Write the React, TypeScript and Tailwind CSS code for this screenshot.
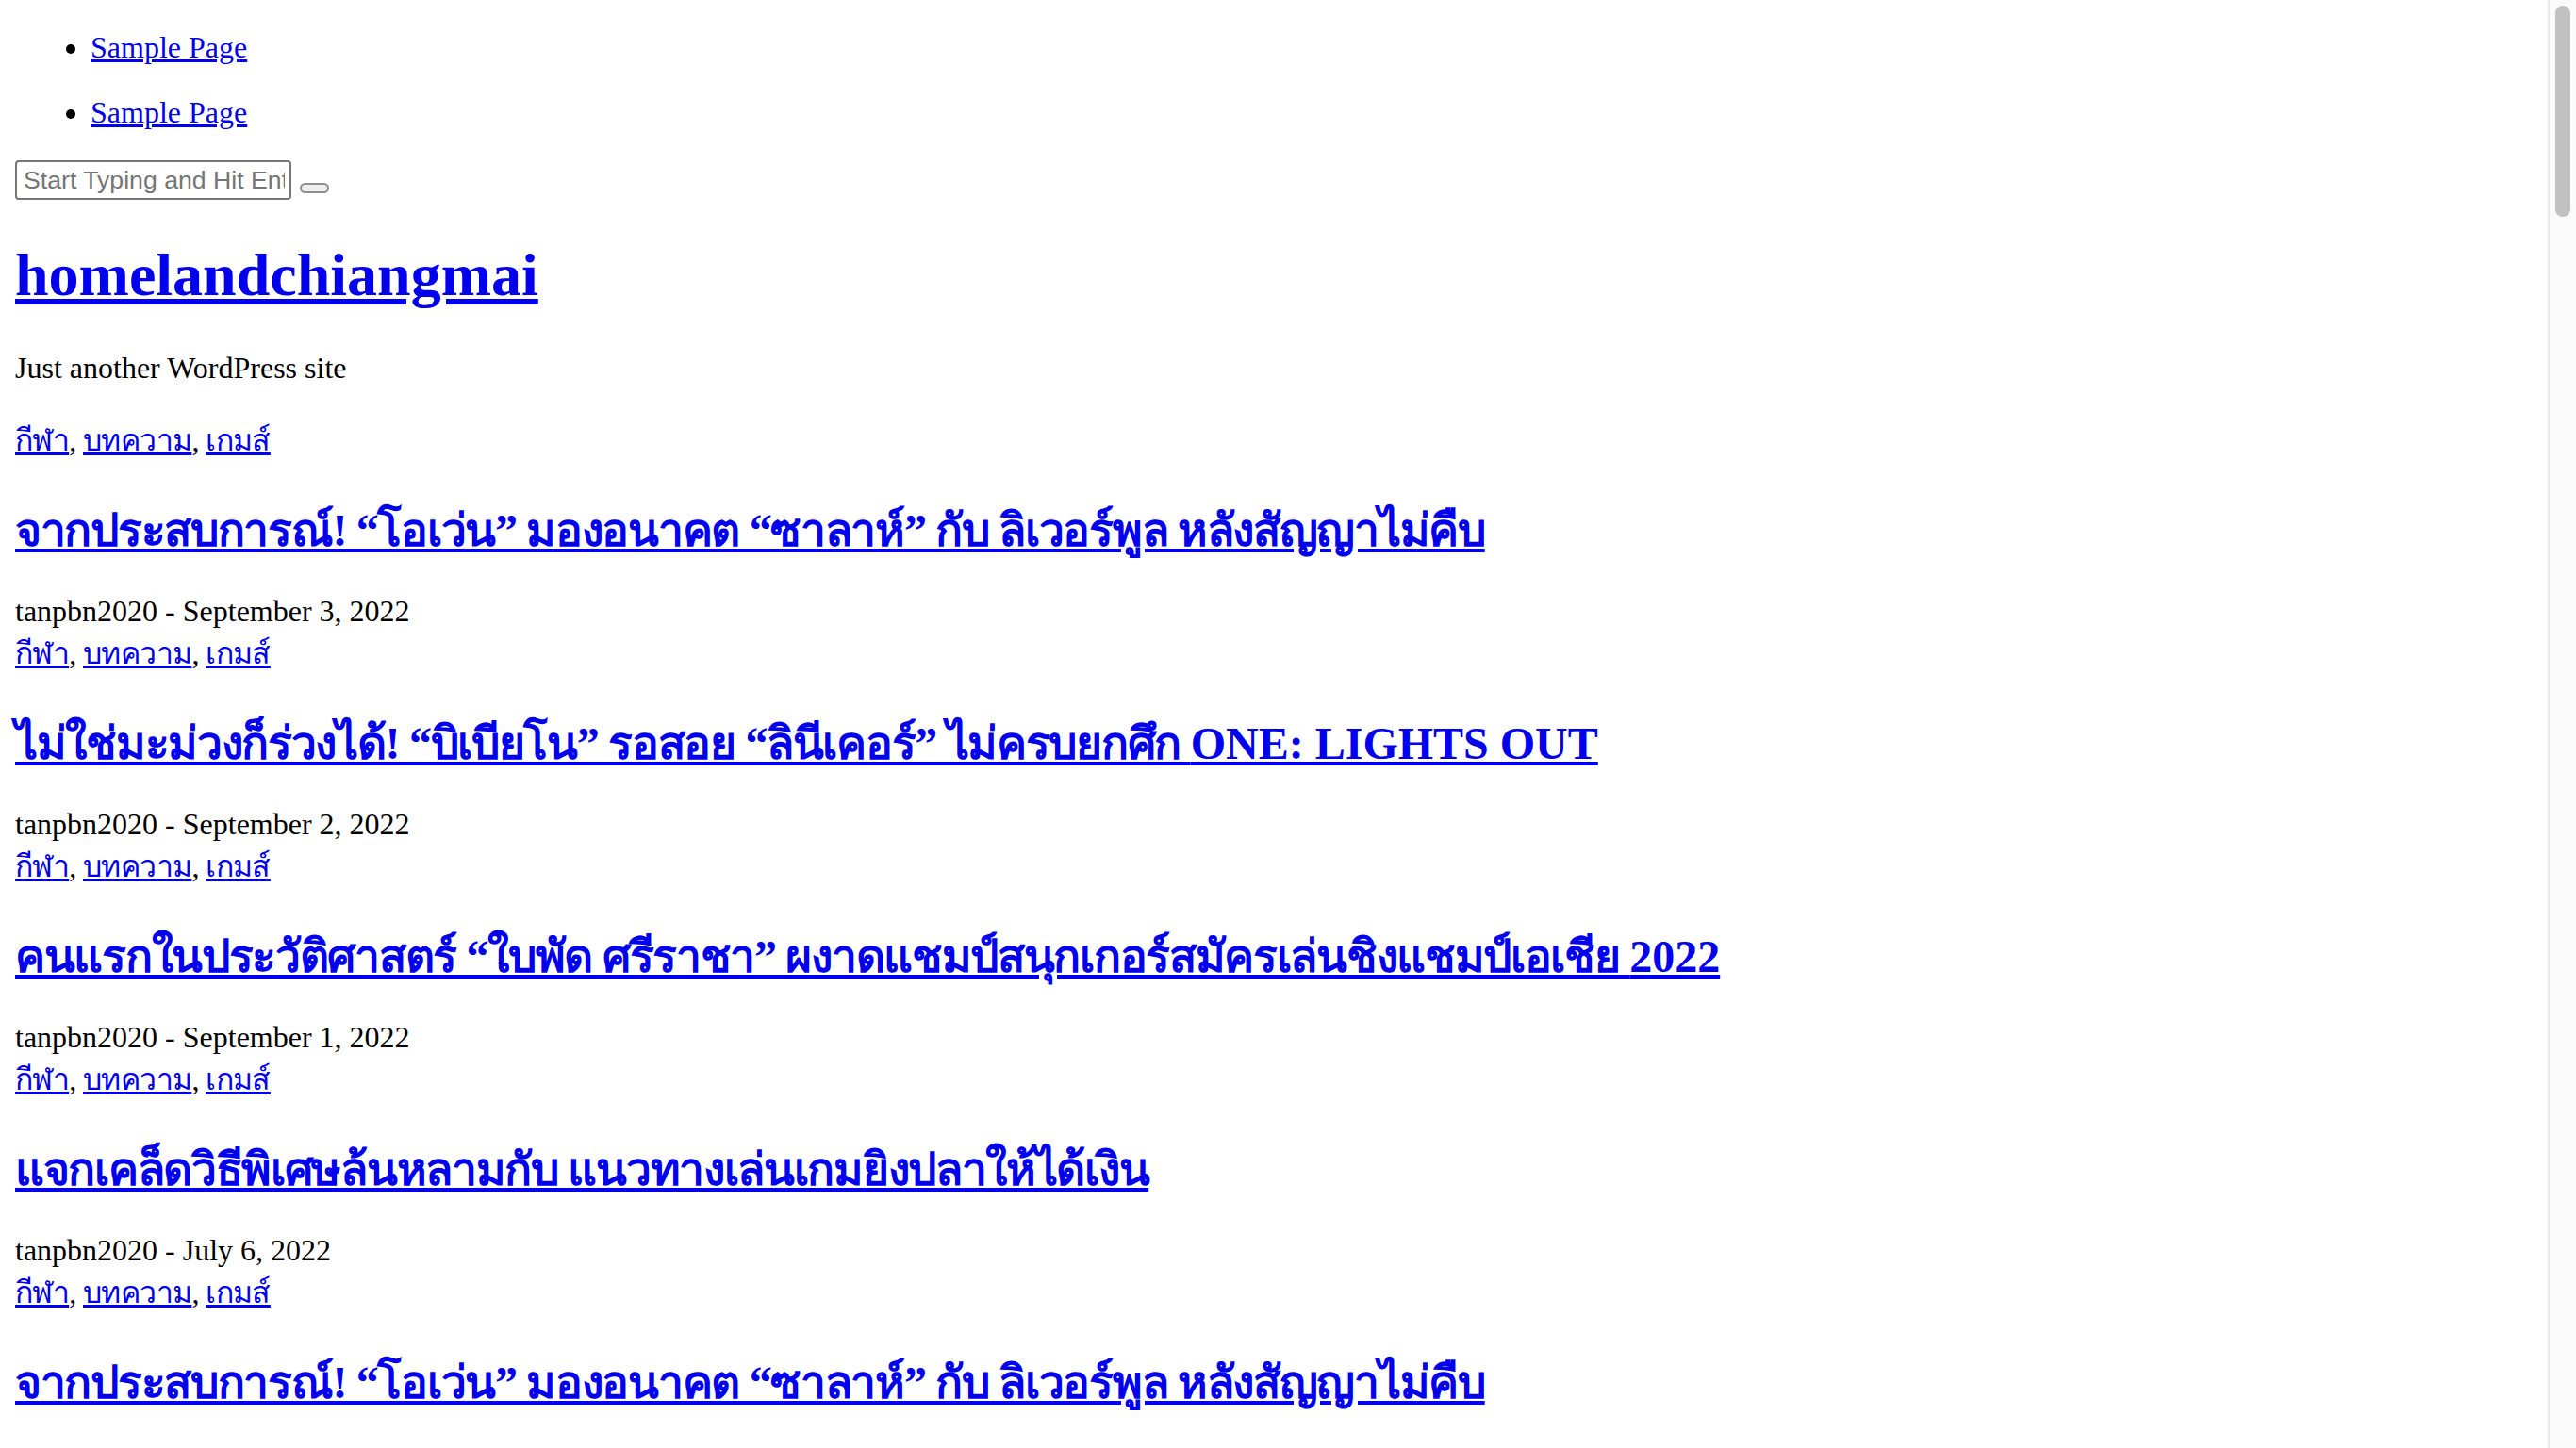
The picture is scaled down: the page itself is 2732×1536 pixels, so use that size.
const posts = [
  {
    title: "จากประสบการณ์! “โอเว่น” มองอนาคต “ซาลาห์” กับ ลิเวอร์พูล หลังสัญญาไม่คืบ",
    date: "September 3, 2022",
  },
  {
    title: "ไม่ใช่มะม่วงก็ร่วงได้! “บิเบียโน” รอสอย “ลินีเคอร์” ไม่ครบยกศึก ONE: LIGHTS OUT",
    date: "September 2, 2022",
  },
  {
    title: "คนแรกในประวัติศาสตร์ “ใบพัด ศรีราชา” ผงาดแชมป์สนุกเกอร์สมัครเล่นชิงแชมป์เอเชีย 2022",
    date: "September 1, 2022",
  },
  {
    title: "แจกเคล็ดวิธีพิเศษล้นหลามกับ แนวทางเล่นเกมยิงปลาให้ได้เงิน",
    date: "July 6, 2022",
  },
];

// the list starts over after the fourth post
const feed = Array.from({ length: 5 }, (_, i) => posts[i % posts.length]);

const link = "text-[#0000ee] underline";

// thai runs get tightened, latin runs keep normal spacing
function Title({ text }: { text: string }) {
  const parts = text.split(/([A-Za-z0-9][A-Za-z0-9: ]*[A-Za-z0-9])/);
  return (
    <>
      {parts.map((part, i) =>
        i % 2 === 1 ? (
          <span key={i} className="tracking-normal">
            {part}
          </span>
        ) : (
          <span key={i}>{part}</span>
        )
      )}
    </>
  );
}

export default function App() {
  return (
    <div className="flex h-screen overflow-hidden bg-white font-['Liberation_Serif',serif] text-[32px] leading-[37px] text-black">
      <main className="min-w-0 flex-1 overflow-hidden px-4 pb-8">
        <ul className="mt-8 list-disc pl-20">
          <li>
            <a href="#" className={link}>Sample Page</a>
          </li>
        </ul>
        <ul className="mt-8 list-disc pl-20">
          <li>
            <a href="#" className={link}>Sample Page</a>
          </li>
        </ul>

        <form className="mt-8 flex items-start">
          <input
            type="text"
            placeholder="Start Typing and Hit Enter"
            className="h-[42px] w-[293px] rounded-[4px] border-2 border-[#767676] bg-white pl-[7px] pr-[5px] font-['Liberation_Sans',sans-serif] text-[26.67px] text-black placeholder:text-[#757575]"
          />
          <button
            type="submit"
            className="ml-[9px] mt-[24px] h-[11px] w-[31px] rounded-full border-2 border-[#8f8f8f] bg-[#efefef]"
          />
        </form>

        <h1 className="mt-[43px] text-[64px] font-bold leading-[73.6px]">
          <a href="#" className={link}>homelandchiangmai</a>
        </h1>
        <p className="mt-[43px]">Just another WordPress site</p>

        <div className="mt-8">
          {feed.map((post, i) => (
            <article key={i}>
              <div className="pt-[8px] leading-[36px] tracking-[-0.6px]">
                <a href="#" className={link}>กีฬา</a>, <a href="#" className={link}>บทความ</a>,{" "}
                <a href="#" className={link}>เกมส์</a>
              </div>
              <h2 className="mb-[35px] mt-[45px] whitespace-nowrap text-[48px] font-bold leading-[65px] tracking-[-1.3px]">
                <a href="#" className={link}>
                  <Title text={post.title} />
                </a>
              </h2>
              <div>tanpbn2020 - {post.date}</div>
            </article>
          ))}
        </div>
      </main>

      <aside className="w-[30px] shrink-0 border-l-2 border-[#e8e8e8] bg-[#fafafa] px-[6px] pt-[6px]">
        <div className="h-[224px] w-[16px] rounded-full bg-[#c1c1c1]" />
      </aside>
    </div>
  );
}
